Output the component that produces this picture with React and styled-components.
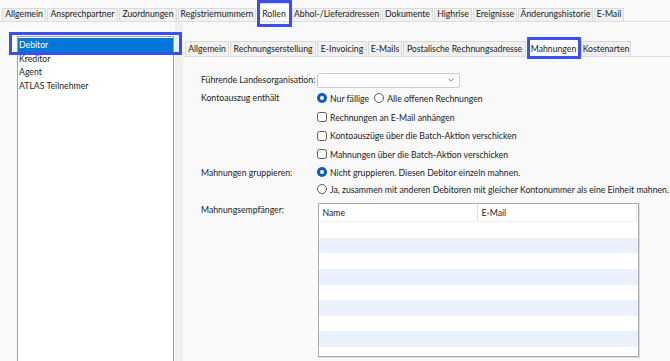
import React from "react";
import styled, { createGlobalStyle } from "styled-components";

// global
const GlobalStyle = createGlobalStyle`
  html, body {
    margin: 0;
    padding: 0;
    background: #f9f9f9;
  }
  body {
    font-family: Lato, "Liberation Sans", sans-serif;
    font-size: 8.7px;
    color: #1b1b1b;
  }
`;

const Page = styled.div`
  width: 670px;
  height: 361px;
  overflow: hidden;
  display: flex;
  flex-direction: column;
  background: #f9f9f9;
`;

// tabs
const TabStrip = styled.div`
  display: flex;
  align-items: flex-end;
  gap: 1px;
  height: ${(p) => p.height}px;
  padding-left: ${(p) => p.indent}px;
  border-bottom: 1px solid #dedede;
  box-sizing: border-box;
  flex-shrink: 0;
`;

const Tab = styled.div`
  position: relative;
  width: ${(p) => p.width}px;
  height: ${(p) => (p.active ? p.activeHeight : p.tabHeight)}px;
  display: flex;
  align-items: flex-end;
  justify-content: center;
  padding-bottom: 1px;
  line-height: 12px;
  box-sizing: border-box;
  background: ${(p) => (p.active ? "#ffffff" : "#f0f0f0")};
  border: 1px solid #dadada;
  border-bottom: none;
  white-space: nowrap;
  flex-shrink: 0;
`;

// blue annotation frame lying over a part
const Marked = styled.div`
  position: relative;
  &::after {
    content: "";
    position: absolute;
    inset: ${(p) => p.inset};
    border: 3px solid #3b4ef0;
    pointer-events: none;
    z-index: 2;
  }
`;

// body
const Body = styled.div`
  flex: 1;
  display: flex;
  min-height: 0;
`;

const LeftPane = styled.div`
  width: 183px;
  display: flex;
  padding: 14px 0 0 17px;
  box-sizing: border-box;
  flex-shrink: 0;
`;

const ListBox = styled.div`
  width: 157px;
  height: 420px;
  background: #ffffff;
  border: 1px solid #a2a2a2;
  box-sizing: border-box;
  padding-top: 1px;
  flex-shrink: 0;
`;

const ListItem = styled.div`
  height: 13.5px;
  line-height: 13.5px;
  padding-left: 1px;
  background: ${(p) => (p.selected ? "#0078d7" : "transparent")};
  color: ${(p) => (p.selected ? "#ffffff" : "#1b1b1b")};
  white-space: nowrap;
`;

const Splitter = styled.div`
  width: 8px;
  margin: -14px 0 0 1px;
  background: #efefef;
  flex-shrink: 0;
`;

const RightPane = styled.div`
  flex: 1;
  display: flex;
  flex-direction: column;
  min-width: 0;
`;

// form
const Form = styled.div`
  display: flex;
  flex-direction: column;
  padding: 14px 0 0 18px;
`;

const FieldRow = styled.div`
  display: flex;
  align-items: flex-start;
  margin-top: ${(p) => p.gap || 0}px;
`;

const Label = styled.div`
  width: 116px;
  flex-shrink: 0;
  height: ${(p) => p.height}px;
  line-height: ${(p) => p.height}px;
  white-space: nowrap;
`;

const Controls = styled.div`
  display: flex;
  flex-direction: column;
`;

const Option = styled.div`
  display: flex;
  align-items: center;
  height: ${(p) => p.height}px;
  white-space: nowrap;
`;

const OptionText = styled.span`
  margin-left: 3px;
  margin-right: 5px;
`;

const Select = styled.div`
  width: 143px;
  height: 15px;
  margin-top: 1.5px;
  background: #ffffff;
  border: 1px solid #cdcdcd;
  border-radius: 2px;
  box-sizing: border-box;
  display: flex;
  align-items: center;
  justify-content: flex-end;
  padding-right: 5px;
`;

// table
const Table = styled.div`
  width: 321px;
  height: 154px;
  margin-left: 0.5px;
  background: #ffffff;
  border: 1px solid #ababab;
  box-shadow: 1px 1px 0 #dcdcdc;
  box-sizing: border-box;
  overflow: hidden;
`;

const HeaderRow = styled.div`
  display: flex;
  height: 18px;
  padding-right: 1px;
  border-bottom: 1px solid #f2f2f2;
  box-sizing: border-box;
`;

const HeaderCell = styled.div`
  width: ${(p) => (p.width ? `${p.width}px` : "auto")};
  flex: ${(p) => (p.width ? "none" : 1)};
  padding-left: 4px;
  line-height: 17px;
  border-right: 1px solid #e4e4e4;
  box-sizing: border-box;
`;

const DataRow = styled.div`
  height: 15.6px;
  background: ${(p) => (p.odd ? "#eaf1fc" : "#ffffff")};
`;

// icons
const RadioIcon = ({ checked }) => (
  <svg width="10" height="10" viewBox="0 0 10 10">
    {checked ? (
      <>
        <circle cx="5" cy="5" r="5" fill="#0a5cc0" />
        <circle cx="5" cy="5" r="2" fill="#ffffff" />
      </>
    ) : (
      <circle cx="5" cy="5" r="4.5" fill="#ffffff" stroke="#5c5c5c" />
    )}
  </svg>
);

const CheckIcon = () => (
  <svg width="10" height="10" viewBox="0 0 10 10">
    <rect x="0.5" y="0.5" width="9" height="9" rx="2" fill="#ffffff" stroke="#5c5c5c" />
  </svg>
);

const Chevron = () => (
  <svg width="6" height="4" viewBox="0 0 6 4">
    <path d="M0.5 0.5 L3 3 L5.5 0.5" fill="none" stroke="#777" strokeWidth="0.9" />
  </svg>
);

const topTabs = [
  ["Allgemein", 44],
  ["Ansprechpartner", 71],
  ["Zuordnungen", 58],
  ["Registriernummern", 78],
  ["Rollen", 34, true],
  ["Abhol-/Lieferadressen", 89],
  ["Dokumente", 51],
  ["Highrise", 38],
  ["Ereignisse", 44],
  ["Änderungshistorie", 75],
  ["E-Mail", 30],
];

const innerTabs = [
  ["Allgemein", 44],
  ["Rechnungserstellung", 86],
  ["E-Invoicing", 50],
  ["E-Mails", 34],
  ["Postalische Rechnungsadresse", 123],
  ["Mahnungen", 53, true],
  ["Kostenarten", 50],
];

const roles = ["Debitor", "Kreditor", "Agent", "ATLAS Teilnehmer"];

const renderTabs = (tabs, tabHeight, activeHeight, inset) =>
  tabs.map(([title, width, active]) => {
    const tab = (
      <Tab
        key={title}
        width={width}
        active={active}
        tabHeight={tabHeight}
        activeHeight={activeHeight}
      >
        {title}
      </Tab>
    );
    if (!active) return tab;
    return (
      <Marked key={title} inset={inset}>
        {tab}
      </Marked>
    );
  });

export default function App() {
  return (
    <>
      <GlobalStyle />
      <Page>
        <TabStrip height={22} indent={2}>
          {renderTabs(topTabs, 13, 18, "-3px -1px -6px 0")}
        </TabStrip>
        <Body>
          <LeftPane>
            <ListBox>
              {roles.map((r, i) =>
                i === 0 ? (
                  <Marked key={r} inset="-6px -9px -3.5px -9px">
                    <ListItem selected>{r}</ListItem>
                  </Marked>
                ) : (
                  <ListItem key={r}>{r}</ListItem>
                )
              )}
            </ListBox>
            <Splitter />
          </LeftPane>
          <RightPane>
            <TabStrip height={35} indent={2}>
              {renderTabs(innerTabs, 15, 17, "-2px -1px -3px 0")}
            </TabStrip>
            <Form>
              <FieldRow>
                <Label height={17}>Führende Landesorganisation:</Label>
                <Select>
                  <Chevron />
                </Select>
              </FieldRow>
              <FieldRow>
                <Label height={20}>Kontoauszug enthält</Label>
                <Option height={20}>
                  <RadioIcon checked />
                  <OptionText>Nur fällige</OptionText>
                  <RadioIcon />
                  <OptionText>Alle offenen Rechnungen</OptionText>
                </Option>
              </FieldRow>
              <FieldRow>
                <Label height={18.5} />
                <Controls>
                  <Option height={18.5}>
                    <CheckIcon />
                    <OptionText>Rechnungen an E-Mail anhängen</OptionText>
                  </Option>
                  <Option height={18.5}>
                    <CheckIcon />
                    <OptionText>Kontoauszüge über die Batch-Aktion verschicken</OptionText>
                  </Option>
                  <Option height={18.5}>
                    <CheckIcon />
                    <OptionText>Mahnungen über die Batch-Aktion verschicken</OptionText>
                  </Option>
                </Controls>
              </FieldRow>
              <FieldRow>
                <Label height={17}>Mahnungen gruppieren:</Label>
                <Controls>
                  <Option height={17}>
                    <RadioIcon checked />
                    <OptionText>Nicht gruppieren. Diesen Debitor einzeln mahnen.</OptionText>
                  </Option>
                  <Option height={17}>
                    <RadioIcon />
                    <OptionText>
                      Ja, zusammen mit anderen Debitoren mit gleicher Kontonummer als eine Einheit mahnen.
                    </OptionText>
                  </Option>
                </Controls>
              </FieldRow>
              <FieldRow gap={5.8}>
                <Label height={14}>Mahnungsempfänger:</Label>
                <Table>
                  <HeaderRow>
                    <HeaderCell width={159}>Name</HeaderCell>
                    <HeaderCell>E-Mail</HeaderCell>
                  </HeaderRow>
                  {Array.from({ length: 9 }).map((_, i) => (
                    <DataRow key={i} odd={i % 2 === 1} />
                  ))}
                </Table>
              </FieldRow>
            </Form>
          </RightPane>
        </Body>
      </Page>
    </>
  );
}
